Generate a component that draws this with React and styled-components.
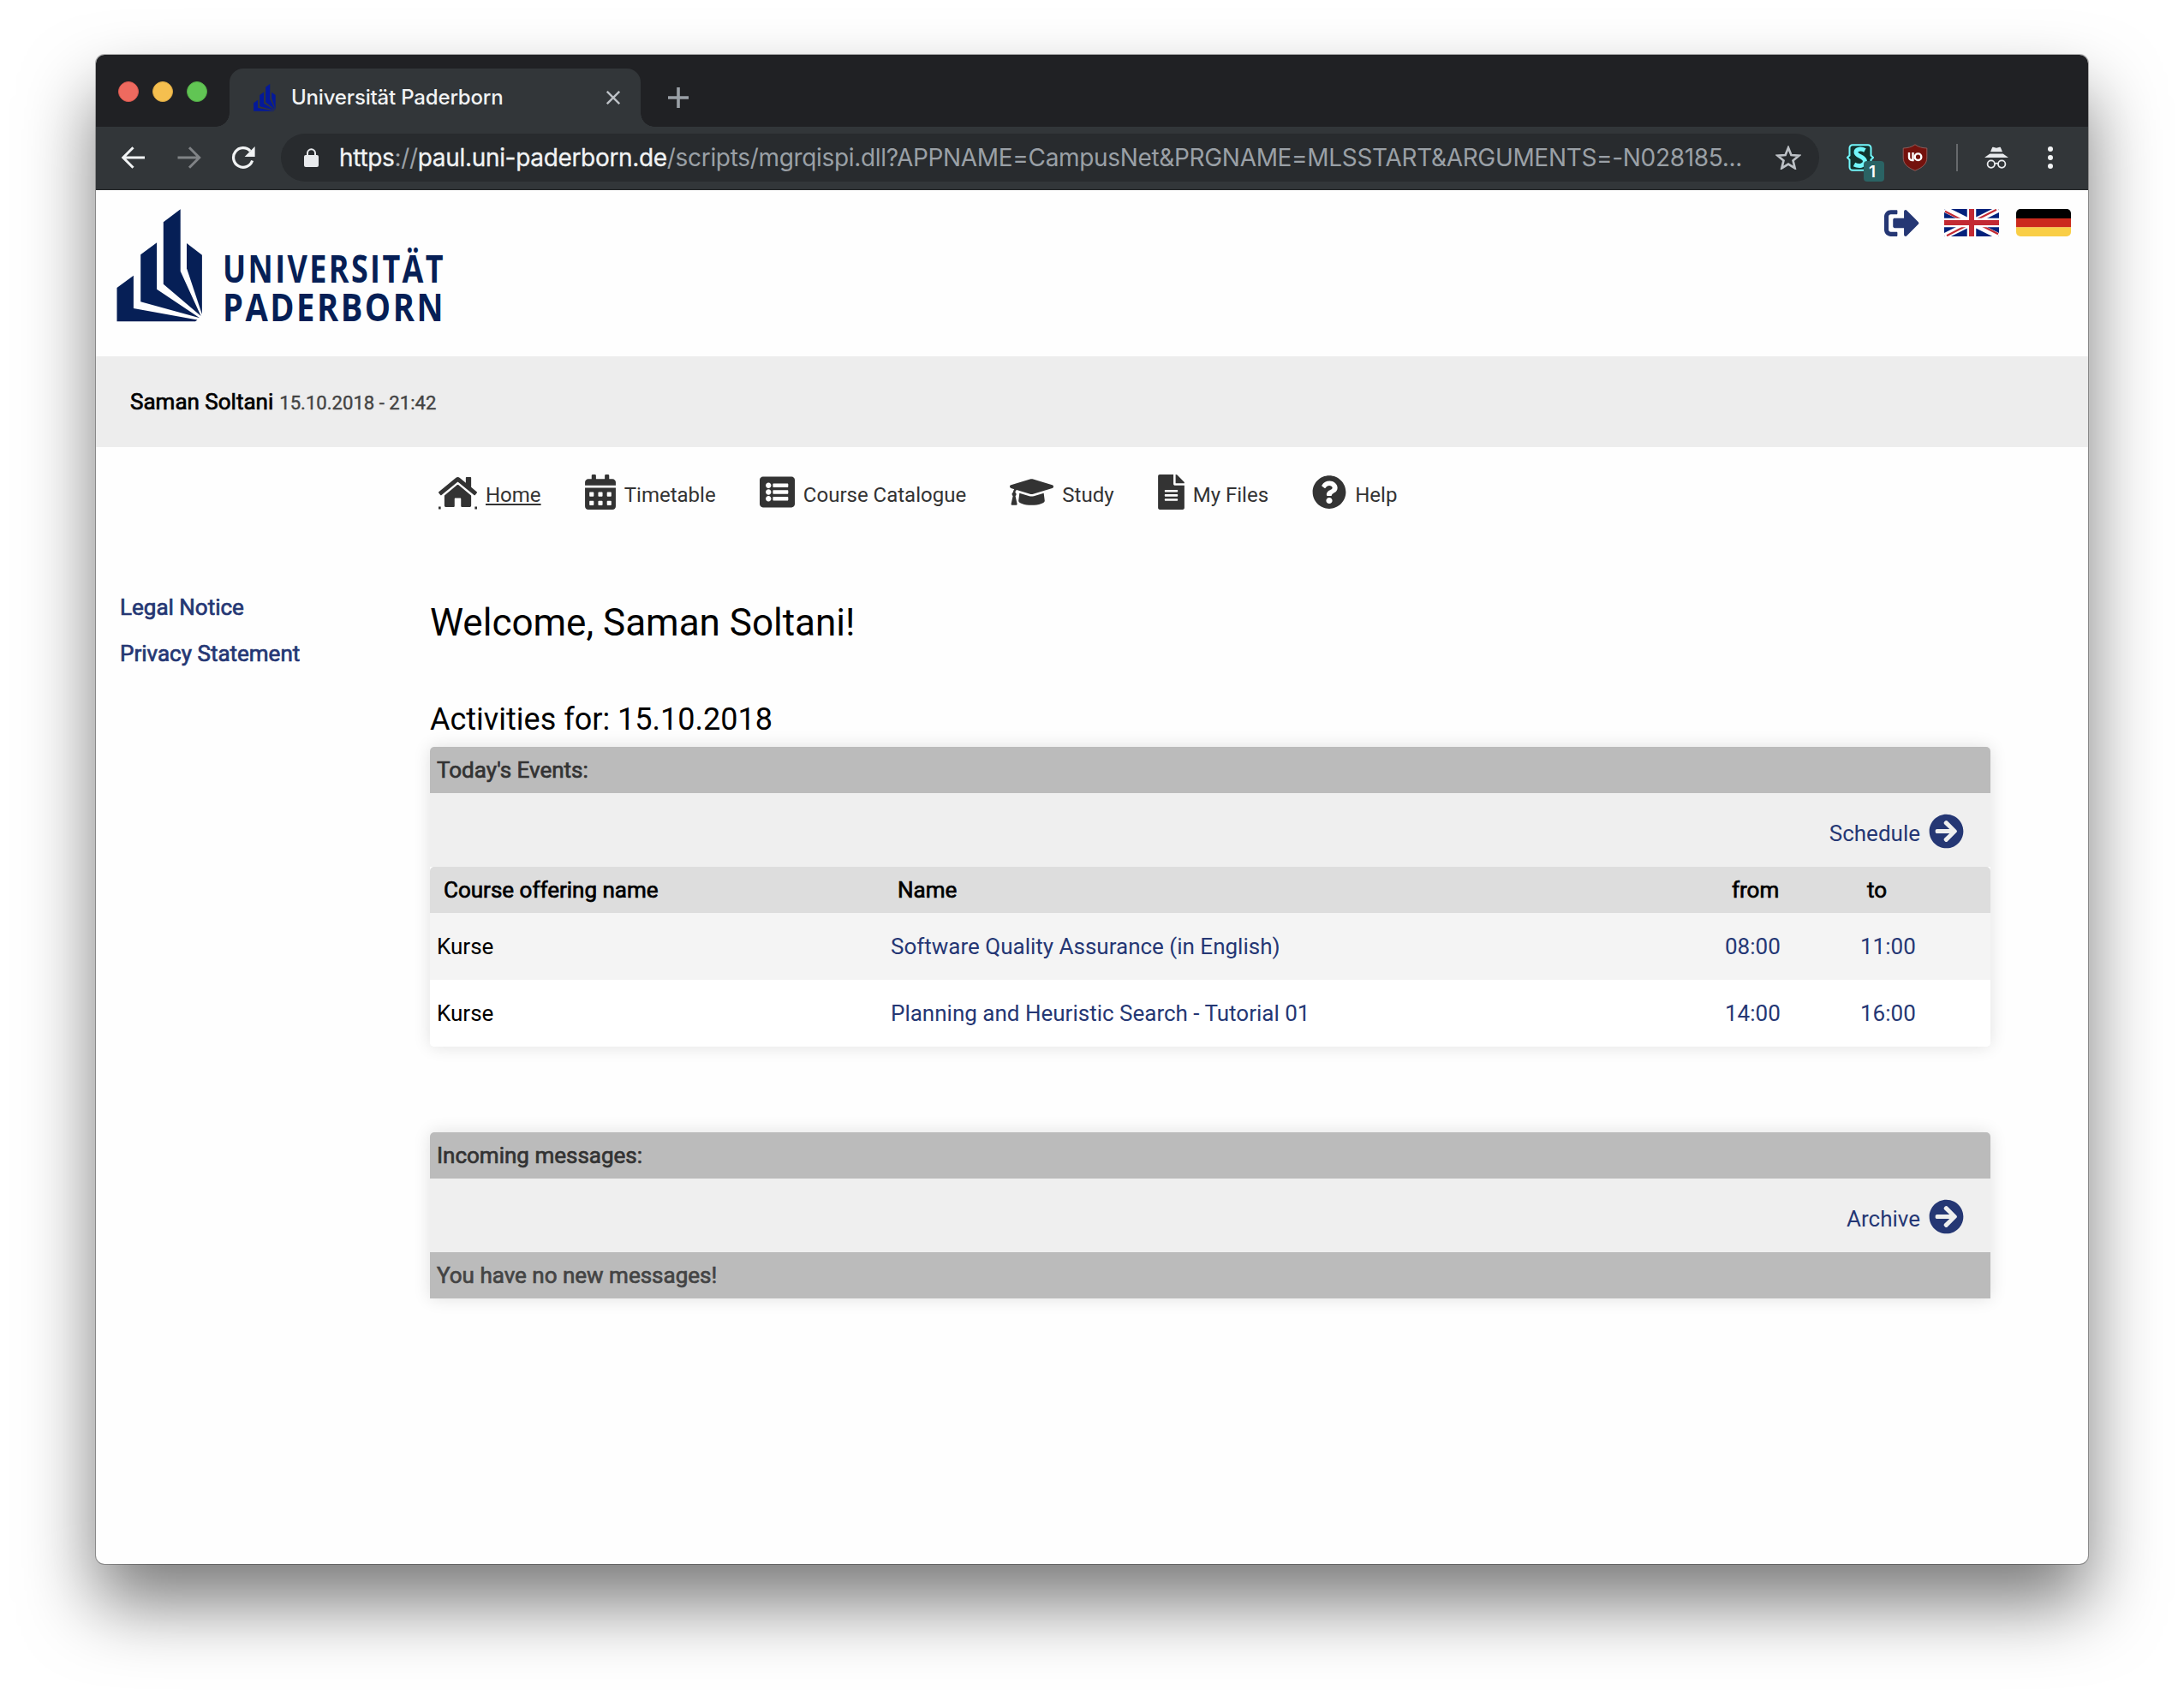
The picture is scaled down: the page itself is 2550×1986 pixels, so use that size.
import React from "react";
import styled, { createGlobalStyle } from "styled-components";
import {
  FaCalendarAlt,
  FaListAlt,
  FaGraduationCap,
  FaFileAlt,
  FaQuestionCircle,
  FaSignOutAlt,
  FaArrowCircleRight,
} from "react-icons/fa";

const navy = "#253774";
const ink = "#333333";

const GlobalStyle = createGlobalStyle`
  * { box-sizing: border-box; }
  body {
    margin: 0;
    background: #fff;
    font-family: Roboto, "Liberation Sans", sans-serif;
    font-size: 26px;
    color: #000;
  }
  svg { display: block; flex: none; }
`;

const Desktop = styled.div`
  width: 2550px;
  height: 1986px;
  padding: 64px 112px 160px;
  overflow: hidden;
`;

const Window = styled.div`
  display: flex;
  flex-direction: column;
  width: 2326px;
  height: 1762px;
  border-radius: 10px;
  background: #fefefe;
  box-shadow: 0 0 0 1px rgba(0, 0, 0, 0.28), 0 46px 84px rgba(0, 0, 0, 0.52);
`;

/* ---------- browser chrome ---------- */

const TabStrip = styled.div`
  display: flex;
  align-items: flex-end;
  height: 84px;
  padding-left: 26px;
  border-radius: 10px 10px 0 0;
  background: #202124;
`;

const TrafficLights = styled.div`
  display: flex;
  gap: 16px;
  padding-bottom: 29px;
  margin-right: 26px;
`;

const Light = styled.span`
  width: 24px;
  height: 24px;
  border-radius: 50%;
  background: ${(p) => p.$color};
  border: 1px solid ${(p) => p.$edge};
`;

const Tab = styled.div`
  position: relative;
  display: flex;
  align-items: center;
  width: 480px;
  height: 68px;
  padding: 0 24px 0 28px;
  border-radius: 16px 16px 0 0;
  background: #323639;

  &::before,
  &::after {
    content: "";
    position: absolute;
    bottom: 0;
    width: 16px;
    height: 16px;
  }
  &::before {
    left: -16px;
    background: radial-gradient(circle at 0 0, transparent 15.5px, #323639 16px);
  }
  &::after {
    right: -16px;
    background: radial-gradient(circle at 100% 0, transparent 15.5px, #323639 16px);
  }
`;

const TabTitle = styled.span`
  flex: 1;
  margin-left: 18px;
  font: 500 24px/68px Inter, sans-serif;
  letter-spacing: -0.18px;
  white-space: nowrap;
  color: #f1f3f4;
`;

const NewTab = styled.div`
  display: flex;
  align-items: center;
  height: 68px;
  margin-left: 32px;
`;

const Toolbar = styled.div`
  display: flex;
  align-items: center;
  height: 74px;
  padding: 0 41px 2px 28px;
  background: #323639;
  border-bottom: 1px solid #232628;
`;

const NavButtons = styled.div`
  display: flex;
  gap: 34.5px;
  margin-right: 29px;
`;

const AddressBar = styled.div`
  display: flex;
  align-items: center;
  width: 1796px;
  height: 56px;
  padding: 0 21px 0 27px;
  border-radius: 28px;
  background: #282b2e;
`;

const Url = styled.span`
  flex: 1;
  margin-left: 24px;
  font: 400 28px/56px Inter, sans-serif;
  letter-spacing: -0.325px;
  white-space: nowrap;
  color: #9aa0a6;

  b {
    font-weight: 400;
    color: #f1f3f4;
    -webkit-text-stroke: 0.3px currentColor;
  }
`;

const Extensions = styled.div`
  display: flex;
  align-items: center;
  margin-left: ${(p) => (p.$end ? "auto" : "32px")};
`;

const ScriptExtension = styled.div`
  position: relative;
  width: 32px;
  height: 32px;
  margin-right: 33px;
`;

const CountBadge = styled.span`
  position: absolute;
  left: 20px;
  top: 20px;
  width: 24px;
  height: 24px;
  border-radius: 4px;
  background: #2a6364;
  color: #fff;
  font: 600 19px/26px Inter, sans-serif;
  text-align: center;
  padding-right: 4px;
`;

const Divider = styled.span`
  width: 2px;
  height: 32px;
  margin: 0 31px 0 33px;
  background: #66696c;
`;

/* ---------- page ---------- */

const PageHeader = styled.header`
  display: flex;
  justify-content: space-between;
  align-items: flex-start;
  height: 194px;
  padding: 18px 20px 0 24px;
`;

const HeaderActions = styled.div`
  display: flex;
  align-items: center;
  height: 40px;

  svg + svg {
    margin-left: 20px;
  }
  svg:first-child {
    margin-right: 9px;
  }
`;

const UserBar = styled.div`
  display: flex;
  align-items: baseline;
  gap: 7px;
  height: 106px;
  padding-left: 40px;
  line-height: 106px;
  background: #ededed;
`;

const Strong = styled.span`
  -webkit-text-stroke: 0.7px currentColor;
`;

const Timestamp = styled.span`
  font-size: 22.1px;
  color: #444;
  -webkit-text-stroke: 0.4px currentColor;
`;

const MainNav = styled.nav`
  display: flex;
  align-items: center;
  gap: 51.2px;
  height: 106px;
  padding-left: 400px;
`;

const NavItem = styled.a`
  display: flex;
  align-items: center;
  gap: 10px;
  height: 50px;
  padding-bottom: 2px;
  font-size: 24px;
  color: ${ink};
`;

const NavLabel = styled.span`
  padding-top: 7px;
  text-decoration: ${(p) => (p.$active ? "underline" : "none")};
  text-decoration-thickness: 2px;
  text-underline-offset: 2px;
`;

const NavGlyph = styled.span`
  display: flex;

  svg {
    width: ${(p) => p.$width}px;
    height: 41px;
  }
`;

const Columns = styled.div`
  display: flex;
  padding-top: 54px;
`;

const Sidebar = styled.aside`
  display: flex;
  flex-direction: column;
  width: 390px;
  padding-left: 28px;
  line-height: 54px;
  color: ${navy};
`;

const Main = styled.main`
  width: 1822px;
`;

const Title = styled.h1`
  margin: 18px 0 0;
  font-size: 44px;
  font-weight: 400;
  line-height: 54px;
`;

const Subtitle = styled.h2`
  margin: 64px 0 0;
  font-size: 36px;
  font-weight: 400;
  line-height: 44px;
`;

const Panel = styled.section`
  margin-top: ${(p) => p.$gap}px;
  border-radius: 5px 5px ${(p) => (p.$flat ? "0 0" : "5px 5px")};
  overflow: hidden;
  background: #fff;
  box-shadow: 0 0 20px rgba(0, 0, 0, 0.12);
`;

const PanelBar = styled.div`
  height: 54px;
  padding-left: 8px;
  line-height: 54px;
  color: ${(p) => (p.$muted ? "#444" : ink)};
  background: #bbbbbb;
`;

const PanelAction = styled.div`
  display: flex;
  justify-content: flex-end;
  align-items: center;
  gap: 10px;
  height: 86px;
  padding: 3px 31px 0 0;
  color: ${navy};
  background: #efefef;

  span {
    padding-top: 5px;
  }
`;

const TableGrid = styled.div`
  display: grid;
  grid-template-columns: 530px 974px 158px 1fr;
`;

const TableHead = styled(TableGrid)`
  height: 54px;
  padding-left: 16px;
  line-height: 54px;
  border-radius: 5px 5px 0 0;
  background: #dddddd;
`;

const TableRow = styled(TableGrid)`
  height: 78px;
  padding-left: 8px;
  line-height: 78px;
  background: ${(p) => (p.$striped ? "#f4f4f4" : "#fff")};
`;

const Cell = styled.span`
  color: ${(p) => (p.$link ? navy : "#000")};
`;

/* ---------- drawings ---------- */

const towerShapes = [
  "54.8,15.3 74.7,.3 74.7,72.7 98.6,125 54.8,87.7",
  "82,40 99.9,53.7 99.9,123 82,69.3",
  "28.2,53.3 47.1,39.3 47.1,93.7 97.2,127.2 28.2,108.3",
  ".5,92 19.9,77.7 19.9,116 94.5,129.6 92,131.2 .5,131.2",
];

const Towers = ({ color }) => (
  <g fill={color}>
    {towerShapes.map((points) => (
      <polygon key={points} points={points} />
    ))}
  </g>
);

const LogoWord = styled.text`
  font-family: "Open Sans", "Noto Sans", sans-serif;
  font-size: 45px;
  font-weight: 700;
  letter-spacing: 3px;
  fill: #061f56;
`;

const UniversityLogo = () => (
  <svg width="400" height="154" viewBox="0 -4 400 154">
    <Towers color="#061f56" />
    <LogoWord x="124" y="85.5" textLength="260" lengthAdjust="spacingAndGlyphs">
      UNIVERSITÄT
    </LogoWord>
    <LogoWord x="124" y="130.5" textLength="260" lengthAdjust="spacingAndGlyphs">
      PADERBORN
    </LogoWord>
  </svg>
);

const Favicon = () => (
  <svg width="26" height="32" viewBox="0 0 101 132" preserveAspectRatio="none">
    <Towers color="#04199a" />
  </svg>
);

const HomeIcon = () => (
  <svg width="45" height="41" viewBox="0 0 576 512" fill={ink}>
    <path d="M488 312.7V456c0 13.300-10.700 24-24 24H348c-6.600 0-12-5.400-12-12V356c0-6.600-5.400-12-12-12h-72c-6.600 0-12 5.400-12 12v112c0 6.600-5.400 12-12 12H112c-13.300 0-24-10.700-24-24V312.700c0-3.600 1.600-7 4.400-9.300l188-154.800c4.400-3.600 10.800-3.600 15.300 0l188 154.800c2.700 2.300 4.300 5.700 4.300 9.300zm83.600-60.900L488 182.900V44.400c0-6.600-5.400-12-12-12h-56c-6.600 0-12 5.400-12 12V117l-89.500-73.700c-17.700-14.600-43.300-14.600-61 0L4.400 251.800c-5.100 4.200-5.800 11.800-1.600 16.900l25.500 31c4.200 5.100 11.800 5.800 16.900 1.600l235.200-193.700c4.400-3.600 10.800-3.600 15.300 0l235.200 193.700c5.100 4.200 12.700 3.500 16.900-1.600l25.500-31c4.200-5.200 3.400-12.700-1.700-16.900z" />
    <path d="M0 474h34v38H0zM542 474h34v38h-34z" />
  </svg>
);

const CloseIcon = () => (
  <svg width="16" height="16" viewBox="0 0 16 16" stroke="#bdc1c6" strokeWidth="2.400">
    <path d="M.8.8l14.400 14.400M15.200.8L.8 15.200" />
  </svg>
);

const PlusIcon = () => (
  <svg width="24" height="24" viewBox="0 0 24 24" stroke="#9aa0a6" strokeWidth="3.600">
    <path d="M12 0v24M0 12h24" />
  </svg>
);

const BackIcon = () => (
  <svg width="30" height="28" viewBox="0 0 30 28" fill="none" stroke="#f1f3f4" strokeWidth="3">
    <path d="M29 14H4M15.500 2.200L3.800 14l11.700 11.800" />
  </svg>
);

const ForwardIcon = () => (
  <svg width="30" height="28" viewBox="0 0 30 28" fill="none" stroke="#808386" strokeWidth="3">
    <path d="M2.500 14h25M16 2.200L27.700 14 16 25.800" />
  </svg>
);

const ReloadIcon = () => (
  <svg width="30" height="28" viewBox="0 0 30 28" fill="none" stroke="#f1f3f4" strokeWidth="3.200">
    <path d="M25.600 17.500a11.300 11.300 0 1 1-2.400-11.200" />
    <path d="M28.600 1v12h-12z" fill="#f1f3f4" stroke="none" />
  </svg>
);

const LockIcon = () => (
  <svg width="17" height="22" viewBox="0 0 17 22">
    <path d="M4 9V5.800a4.500 4.500 0 0 1 9 0V9" fill="none" stroke="#e8eaed" strokeWidth="2" />
    <rect y="8" width="17" height="14" rx="2" fill="#e8eaed" />
  </svg>
);

const StarIcon = () => (
  <svg width="30" height="28" viewBox="0 0 30 28" fill="none" stroke="#bdc1c6" strokeWidth="2.600">
    <path d="M15 2.500l3.400 8.500 9 .7-6.900 5.700 2.200 9L15 21.600l-7.700 4.800 2.200-9L2.600 11.700l9-.7z" />
  </svg>
);

const BraceSIcon = () => (
  <svg width="32" height="32" viewBox="0 0 32 32">
    <path
      d="M7 1.300h18a3.500 3.500 0 0 1 3.500 3.500v8.700l2.700 2.500-2.700 2.500v8.700a3.500 3.500 0 0 1-3.500 3.500H7a3.500 3.500 0 0 1-3.500-3.500v-8.700L.8 16l2.700-2.500V4.800A3.500 3.500 0 0 1 7 1.300z"
      fill="#12322e"
      stroke="#73f7fb"
      strokeWidth="2"
    />
    <path
      d="M21.500 7.500c-4-2.200-10.500-2-10.500 2.200 0 5 10.500 4.600 10.500 10.600 0 5.500-7.500 6.400-12.500 3.700"
      fill="none"
      stroke="#73f7fb"
      strokeWidth="5"
    />
  </svg>
);

const ShieldIcon = () => (
  <svg width="30" height="32" viewBox="0 0 30 32">
    <path
      d="M15 .8c4 3 8.500 4 13.800 4.200V16c0 7.500-5 11.500-13.800 15.200C6.200 27.500 1.200 23.500 1.200 16V5C6.500 4.800 11 3.800 15 .8z"
      fill="#74120d"
      stroke="#8f5b59"
      strokeWidth="1"
    />
    <path d="M8 10v5.500a3.300 3.300 0 0 0 3.300 3.500h1.200V10" fill="none" stroke="#fff" strokeWidth="2.400" />
    <circle cx="18.500" cy="15.200" r="3.800" fill="none" stroke="#fff" strokeWidth="2.400" />
  </svg>
);

const IncognitoIcon = () => (
  <svg width="28" height="26" viewBox="0 0 28 26">
    <path d="M9.200 1c1.600-.9 3 .7 4.800.7S17.200.1 18.800 1l2.200 5.300H7zM6.300 8.600h15.400L28 13H0z" fill="#e8eaed" />
    <g fill="none" stroke="#e8eaed" strokeWidth="1.800">
      <circle cx="7.800" cy="20.600" r="4.200" />
      <circle cx="20.200" cy="20.600" r="4.200" />
      <path d="M12 20.200q2-1 4 0" />
    </g>
  </svg>
);

const MenuDotsIcon = () => (
  <svg width="6" height="28" viewBox="0 0 6 28" fill="#f1f3f4">
    <circle cx="3" cy="4" r="3" />
    <circle cx="3" cy="14" r="3" />
    <circle cx="3" cy="24" r="3" />
  </svg>
);

const BritishFlag = () => (
  <svg width="64" height="32" viewBox="0 0 64 32">
    <clipPath id="uk-frame">
      <rect width="64" height="32" rx="1.500" />
    </clipPath>
    <g clipPath="url(#uk-frame)">
      <rect width="64" height="32" fill="#03217b" />
      <path d="M0 0l64 32M64 0L0 32" stroke="#fff" strokeWidth="7" />
      <path d="M1 2.800L27 16M63 29.200L37 16M61 .8L33 15M3 31.200L31 17" stroke="#c32a33" strokeWidth="2.200" />
      <path d="M32 0v32M0 16h64" stroke="#fff" strokeWidth="10.500" />
      <path d="M32 0v32M0 16h64" stroke="#c32a33" strokeWidth="6" />
    </g>
  </svg>
);

const GermanFlag = () => (
  <svg width="64" height="32" viewBox="0 0 64 32">
    <clipPath id="de-frame">
      <rect width="64" height="32" rx="5" />
    </clipPath>
    <g clipPath="url(#de-frame)">
      <rect width="64" height="11" fill="#000" />
      <rect y="11" width="64" height="10.500" fill="#cb2a1d" />
      <rect y="21.300" width="64" height="11" fill="#f9ce46" />
    </g>
  </svg>
);

/* ---------- data ---------- */

const navItems = [
  { label: "Home", Icon: HomeIcon, width: 45, active: true },
  { label: "Timetable", Icon: FaCalendarAlt, width: 36 },
  { label: "Course Catalogue", Icon: FaListAlt, width: 41 },
  { label: "Study", Icon: FaGraduationCap, width: 51 },
  { label: "My Files", Icon: FaFileAlt, width: 31 },
  { label: "Help", Icon: FaQuestionCircle, width: 40 },
];

const events = [
  { type: "Kurse", name: "Software Quality Assurance (in English)", from: "08:00", to: "11:00" },
  { type: "Kurse", name: "Planning and Heuristic Search - Tutorial 01", from: "14:00", to: "16:00" },
];

export default function App() {
  return (
    <Desktop>
      <GlobalStyle />
      <Window>
        <TabStrip>
          <TrafficLights>
            <Light $color="#ee6a5f" $edge="#d9584f" />
            <Light $color="#f5bf4f" $edge="#dba843" />
            <Light $color="#61c554" $edge="#52ab46" />
          </TrafficLights>
          <Tab>
            <Favicon />
            <TabTitle>Universität Paderborn</TabTitle>
            <CloseIcon />
          </Tab>
          <NewTab>
            <PlusIcon />
          </NewTab>
        </TabStrip>
        <Toolbar>
          <NavButtons>
            <BackIcon />
            <ForwardIcon />
            <ReloadIcon />
          </NavButtons>
          <AddressBar>
            <LockIcon />
            <Url>
              <b>https</b>://<b>paul.uni-paderborn.de</b>
              /scripts/mgrqispi.dll?APPNAME=CampusNet&amp;PRGNAME=MLSSTART&amp;ARGUMENTS=-N028185...
            </Url>
            <StarIcon />
          </AddressBar>
          <Extensions>
            <ScriptExtension>
              <BraceSIcon />
              <CountBadge>1</CountBadge>
            </ScriptExtension>
            <ShieldIcon />
            <Divider />
            <IncognitoIcon />
          </Extensions>
          <Extensions $end>
            <MenuDotsIcon />
          </Extensions>
        </Toolbar>

        <PageHeader>
          <UniversityLogo />
          <HeaderActions>
            <FaSignOutAlt size={41} color={navy} />
            <BritishFlag />
            <GermanFlag />
          </HeaderActions>
        </PageHeader>

        <UserBar>
          <Strong>Saman Soltani</Strong>
          <Timestamp>15.10.2018 - 21:42</Timestamp>
        </UserBar>

        <MainNav>
          {navItems.map(({ label, Icon, width, active }) => (
            <NavItem key={label}>
              <NavGlyph $width={width}>
                <Icon />
              </NavGlyph>
              <NavLabel $active={active}>{label}</NavLabel>
            </NavItem>
          ))}
        </MainNav>

        <Columns>
          <Sidebar>
            <Strong>Legal Notice</Strong>
            <Strong>Privacy Statement</Strong>
          </Sidebar>
          <Main>
            <Title>Welcome, Saman Soltani!</Title>
            <Subtitle>Activities for: 15.10.2018</Subtitle>

            <Panel $gap={10}>
              <PanelBar>
                <Strong>Today's Events:</Strong>
              </PanelBar>
              <PanelAction>
                <span>Schedule</span>
                <FaArrowCircleRight size={41} />
              </PanelAction>
              <TableHead>
                <Strong>Course offering name</Strong>
                <Strong>Name</Strong>
                <Strong>from</Strong>
                <Strong>to</Strong>
              </TableHead>
              {events.map((event, i) => (
                <TableRow key={event.name} $striped={i % 2 === 0}>
                  <Cell>{event.type}</Cell>
                  <Cell $link>{event.name}</Cell>
                  <Cell $link>{event.from}</Cell>
                  <Cell $link>{event.to}</Cell>
                </TableRow>
              ))}
            </Panel>

            <Panel $gap={100} $flat>
              <PanelBar>
                <Strong>Incoming messages:</Strong>
              </PanelBar>
              <PanelAction>
                <span>Archive</span>
                <FaArrowCircleRight size={41} />
              </PanelAction>
              <PanelBar $muted>
                <Strong>You have no new messages!</Strong>
              </PanelBar>
            </Panel>
          </Main>
        </Columns>
      </Window>
    </Desktop>
  );
}
